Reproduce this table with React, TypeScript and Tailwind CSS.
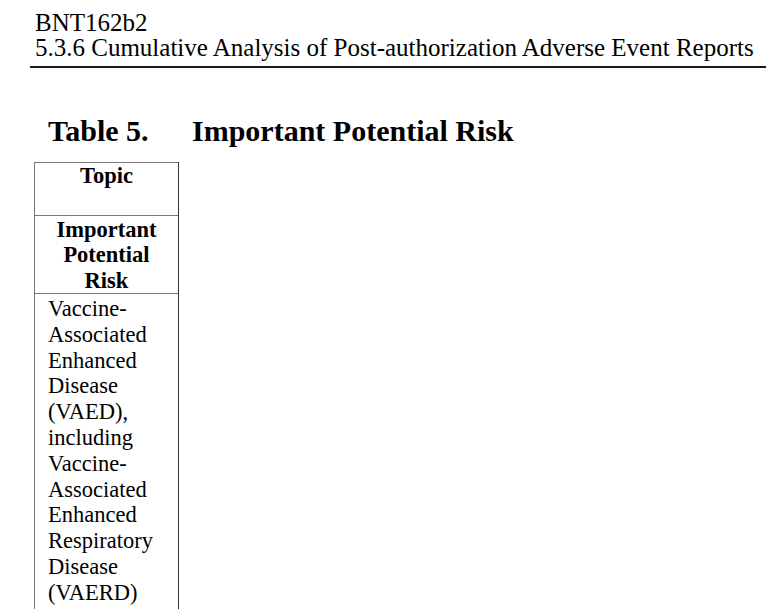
export default function App() {
  const body = [
    "Vaccine-",
    "Associated",
    "Enhanced",
    "Disease",
    "(VAED),",
    "including",
    "Vaccine-",
    "Associated",
    "Enhanced",
    "Respiratory",
    "Disease",
    "(VAERD)",
  ];
  return (
    <div className="w-[766px] h-[609px] overflow-hidden bg-white text-black font-[family-name:Liberation_Serif,serif]">
      <div className="pt-[9.5px] pl-[35px] text-[25px] leading-[25.5px]">
        <div>BNT162b2</div>
        <div className="whitespace-nowrap">5.3.6 Cumulative Analysis of Post-authorization Adverse Event Reports</div>
      </div>
      <div className="ml-[30px] mt-[5.5px] h-[1.5px] bg-[#1a1a1a]" />
      <div className="mt-[46px] pl-[48px] flex text-[30px] leading-[33px] font-bold whitespace-nowrap">
        <span className="w-[144px]">Table 5.</span>
        <span>Important Potential Risk</span>
      </div>
      <div className="mt-[15.5px] ml-[34px] w-[145px] border-l border-r border-l-[#777] border-r-[#333] text-[22.5px]">
        <div className="border-t border-[#777] h-[53px] font-bold text-center leading-[26px]">
          Topic
        </div>
        <div className="border-t border-[#777] h-[78px] font-bold text-center leading-[25.5px] pt-[0.5px]">
          <div>Important</div>
          <div>Potential</div>
          <div>Risk</div>
        </div>
        <div className="border-t border-[#777] pt-[2px] pl-[13px] leading-[25.8px] pb-[40px]">
          {body.map((l, i) => (
            <div key={i}>{l}</div>
          ))}
        </div>
      </div>
    </div>
  );
}
